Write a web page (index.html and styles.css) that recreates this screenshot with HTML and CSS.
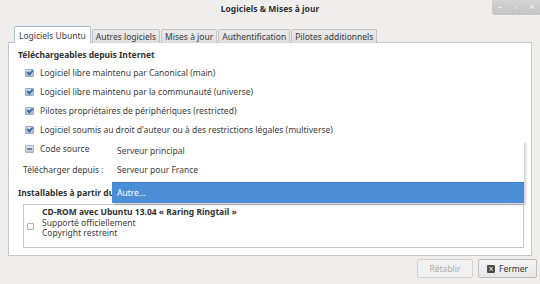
FILE: index.html
```html
<!DOCTYPE html>
<html lang="fr">
<head>
  <meta charset="UTF-8" />
  <title>Logiciels &amp; Mises à jour</title>
  <link rel="stylesheet" href="styles.css">
</head>
<body>
  <div class="window">
    <div class="titlebar">
      <span></span>
      <span class="title">Logiciels &amp; Mises à jour</span>
      <div class="controls">
        <span class="ctl">&#8211;</span>
        <span class="ctl">&#9643;</span>
        <span class="ctl">&#215;</span>
      </div>
    </div>

    <div class="tabs">
      <div class="tab active">Logiciels Ubuntu</div>
      <div class="tab">Autres logiciels</div>
      <div class="tab">Mises à jour</div>
      <div class="tab">Authentification</div>
      <div class="tab">Pilotes additionnels</div>
    </div>

    <div class="panel">
      <h3>Téléchargeables depuis Internet</h3>
      <div class="row"><span class="check on"></span>Logiciel libre maintenu par Canonical (main)</div>
      <div class="row"><span class="check on"></span>Logiciel libre maintenu par la communauté (universe)</div>
      <div class="row"><span class="check on"></span>Pilotes propriétaires de périphériques (restricted)</div>
      <div class="row"><span class="check on"></span>Logiciel soumis au droit d'auteur ou à des restrictions légales (multiverse)</div>
      <div class="row"><span class="check mixed"></span>Code source</div>
      <div class="row from">Télécharger depuis :</div>
      <h3 class="second">Installables à partir du</h3>
      <div class="cdbox">
        <span class="check off"></span>
        <div class="cdtext">
          <b>CD-ROM avec Ubuntu 13.04 « Raring Ringtail »</b>
          <span>Supporté officiellement</span>
          <span>Copyright restreint</span>
        </div>
      </div>

      <ul class="popup">
        <li>Serveur principal</li>
        <li>Serveur pour France</li>
        <li class="sel">Autre...</li>
      </ul>
    </div>

    <div class="footer">
      <button class="btn" disabled>Rétablir</button>
      <button class="btn close"><span class="x-icon">&#215;</span>Fermer</button>
    </div>
  </div>
</body>
</html>
```

FILE: styles.css
```css
body {
  margin: 0;
  font-family: 'Noto Sans', 'Open Sans', sans-serif;
  font-size: 8.5px;
  color: #3c3c3c;
  background: #efeeed;
  overflow: hidden;
}
.window {
  width: 540px;
  height: 284px;
  display: flex;
  flex-direction: column;
}
.titlebar {
  height: 20px;
  display: grid;
  grid-template-columns: 1fr auto 1fr;
  align-items: start;
}
.title {
  font-weight: 700;
  line-height: 17px;
  color: #333;
}
.controls {
  justify-self: end;
  display: flex;
  height: 15px;
  width: 48px;
  background: linear-gradient(#d4d4d4, #c4c4c4);
  border-bottom-left-radius: 3px;
}
.ctl {
  flex: 1;
  text-align: center;
  color: #f6f6f6;
  font-size: 8px;
  line-height: 13px;
}
.tabs {
  display: flex;
  align-items: flex-end;
  height: 16px;
  margin: 7px 0 -1px 14px;
  position: relative;
  z-index: 1;
}
.tab {
  height: 14px;
  line-height: 13px;
  padding: 0 3px;
  border: 1px solid #c3c3c3;
  border-bottom: none;
  border-radius: 2px 2px 0 0;
  background: linear-gradient(#ebebeb, #dcdcdc);
  margin-right: 1px;
  box-sizing: border-box;
}
.tab.active {
  height: 17px;
  line-height: 17px;
  padding: 0 4px;
  background: #fff;
  border-color: #b0c4d6;
  border-top: 1px solid #9fb9d0;
}
.panel {
  position: relative;
  margin: 0 8px;
  background: #fff;
  border: 1px solid #c8c8c8;
  padding: 4px 9px 7px;
  height: 214px;
  box-sizing: border-box;
}
h3 {
  margin: 0;
  font-size: 8.5px;
  font-weight: 700;
  line-height: 16px;
  color: #333;
}
h3.second {
  margin-top: 5px;
}
.row {
  height: 19px;
  display: flex;
  align-items: center;
  padding-left: 7px;
}
.row.from {
  height: 22px;
  padding-left: 5px;
}
.check {
  width: 7px;
  height: 6px;
  margin-right: 6px;
  border-radius: 1px;
  position: relative;
  flex: none;
}
.check.on {
  background: linear-gradient(#d3dded, #a8bcd3);
  border: 1px solid #95abc6;
}
.check.on::after {
  content: "";
  position: absolute;
  left: 1px;
  top: 0;
  width: 4px;
  height: 2px;
  border-left: 2px solid #3d6aa3;
  border-bottom: 2px solid #3d6aa3;
  transform: rotate(-45deg);
}
.check.mixed {
  background: linear-gradient(#dfe6ee, #b9c7d6);
  border: 1px solid #a3b3c6;
}
.check.mixed::after {
  content: "";
  position: absolute;
  left: 1px;
  top: 2px;
  width: 5px;
  height: 2px;
  background: #6f86a3;
}
.cdbox {
  margin: 3px 0 0 5px;
  width: 501px;
  height: 44px;
  box-sizing: border-box;
  border: 1px solid #c8c8c8;
  display: flex;
  align-items: center;
}
.check.off {
  width: 5px;
  height: 5px;
  border: 1px solid #b4b4b4;
  background: linear-gradient(#fff, #ececec);
  margin: 0 8px 0 3px;
}
.cdtext {
  display: flex;
  flex-direction: column;
  line-height: 10.5px;
  align-self: flex-start;
  padding-top: 2px;
}
.cdtext b {
  color: #333;
}
.popup {
  position: absolute;
  left: 103px;
  top: 98px;
  width: 412px;
  margin: 0;
  padding: 0;
  list-style: none;
  background: #fff;
  box-shadow: 2px 2px 2px rgba(0, 0, 0, 0.18);
}
.popup li {
  height: 19px;
  line-height: 19px;
  padding-left: 5px;
}
.popup li.sel {
  margin-top: 3px;
  height: 20px;
  line-height: 20px;
  background: #4a8ed6;
  color: #fff;
  border-top: 1px solid #3f7fc4;
}
.footer {
  display: flex;
  justify-content: flex-end;
  gap: 5px;
  padding-top: 3px;
  margin-right: 3px;
}
.btn {
  font-family: inherit;
  font-size: 8.5px;
  height: 19px;
  width: 56px;
  padding: 0;
  border: 1px solid #bdbdbd;
  border-radius: 2px;
  background: linear-gradient(#f6f6f6, #e6e6e6);
  color: #333;
  display: flex;
  align-items: center;
  justify-content: center;
}
.btn.close {
  width: 59px;
}
.btn:disabled {
  color: #ababab;
  border-color: #d2d2d2;
  background: #f1f1f1;
}
.x-icon {
  width: 8px;
  height: 8px;
  background: #4c4c4c;
  color: #fff;
  font-size: 8px;
  line-height: 8px;
  text-align: center;
  margin-right: 4px;
  border-radius: 1px;
}
```
